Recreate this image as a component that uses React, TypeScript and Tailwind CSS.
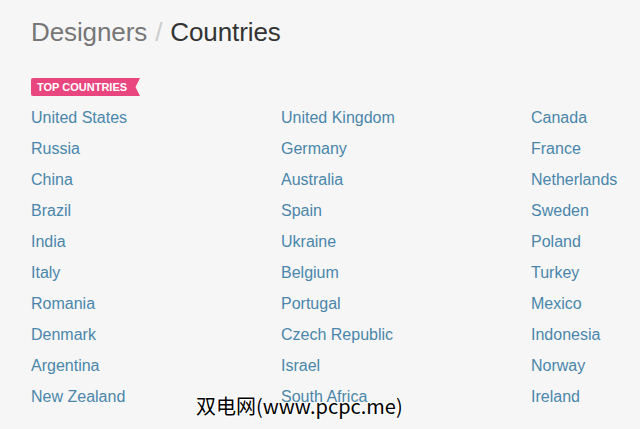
const countries = [
  ["United States", "United Kingdom", "Canada"],
  ["Russia", "Germany", "France"],
  ["China", "Australia", "Netherlands"],
  ["Brazil", "Spain", "Sweden"],
  ["India", "Ukraine", "Poland"],
  ["Italy", "Belgium", "Turkey"],
  ["Romania", "Portugal", "Mexico"],
  ["Denmark", "Czech Republic", "Indonesia"],
  ["Argentina", "Israel", "Norway"],
  ["New Zealand", "South Africa", "Ireland"],
];

export default function App() {
  return (
    <div
      className="relative w-[640px] h-[429px] overflow-hidden bg-[#f6f6f6] pl-[31px] pt-[15px]"
      style={{ fontFamily: '"Liberation Sans", Arial, sans-serif' }}
    >
      <h1 className="text-[26px] leading-[34px] tracking-[-0.1px]">
        <span className="text-[#777777]">Designers</span>
        <span className="text-[#cccccc] mx-[8px]">/</span>
        <span className="text-[#333333]">Countries</span>
      </h1>

      <div className="mt-[29px] flex h-[18px]">
        <div className="bg-[#e9467f] text-white text-[11px] font-bold leading-[18px] pl-[6px] pr-[5px] rounded-l-[2px]">
          TOP COUNTRIES
        </div>
        <svg width="8" height="18" viewBox="0 0 8 18" className="block">
          <polygon points="0,0 8,0 3.5,9 8,18 0,18" fill="#e9467f" />
        </svg>
      </div>

      <div className="mt-[6px] grid grid-cols-[250px_250px_1fr]">
        {countries.map((row) =>
          row.map((c) => (
            <a
              key={c}
              className="text-[16px] leading-[31px] text-[#4a86ab] whitespace-nowrap"
            >
              {c}
            </a>
          ))
        )}
      </div>

      <div
        className="absolute left-[196px] top-[392px] text-[20px] leading-[28px] text-black"
        style={{
          fontFamily: '"Noto Sans CJK SC", "DejaVu Sans", sans-serif',
          textShadow:
            "1px 1px 0 #fff, -1px -1px 0 #fff, 1px -1px 0 #fff, -1px 1px 0 #fff, 0 0 2px #fff",
        }}
      >
        双电网(www.pcpc.me)
      </div>
    </div>
  );
}
